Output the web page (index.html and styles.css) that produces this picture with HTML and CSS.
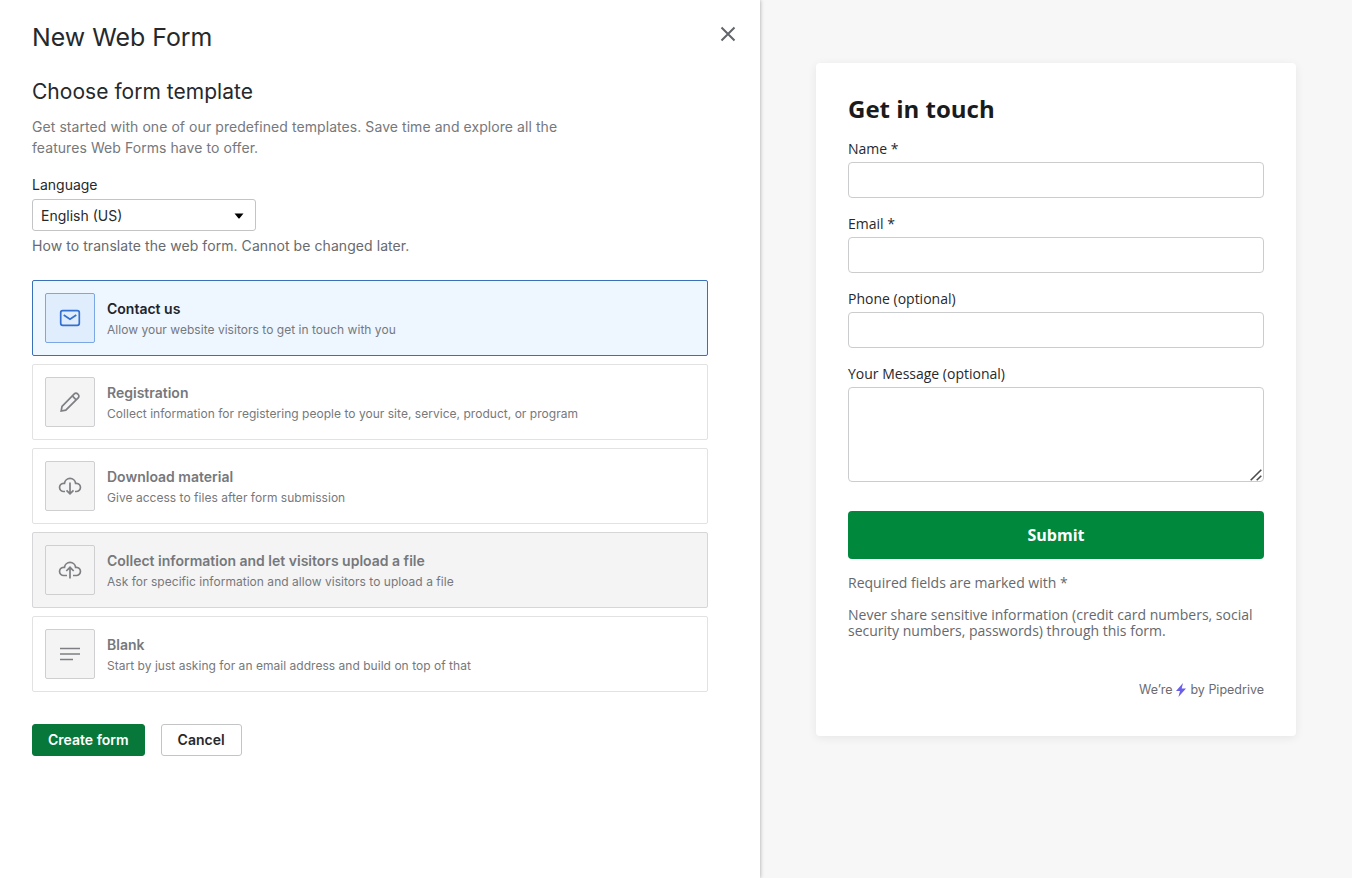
FILE: index.html
```html
<!DOCTYPE html>
<html lang="en">
  <head>
    <meta charset="UTF-8" />
    <meta name="viewport" content="width=device-width, initial-scale=1.0" />
    <title>New Web Form</title>
    <link rel="stylesheet" href="styles.css">
  </head>
  <body>
    <main class="panel">
      <header class="panel-header">
        <h1>New Web Form</h1>
        <button class="close" aria-label="Close">
          <svg width="16" height="16" viewBox="0 0 16 16"><path d="M1.5 1.5l13 13M14.5 1.5l-13 13" /></svg>
        </button>
      </header>

      <h2>Choose form template</h2>
      <p class="intro">Get started with one of our predefined templates. Save time and explore all the features Web Forms have to offer.</p>

      <div class="language">
        <label>Language</label>
        <div class="select">
          <span>English (US)</span>
          <svg width="10" height="6" viewBox="0 0 10 6"><path d="M.5.5h9L5.600 5.200a.8.8 0 0 1-1.200 0z" /></svg>
        </div>
        <p class="hint">How to translate the web form. Cannot be changed later.</p>
      </div>

      <div class="templates">
        <div class="template selected">
          <div class="template-icon">
            <svg width="24" height="24" viewBox="0 0 24 24">
              <rect x="2.7" y="4.7" width="18.6" height="14.6" rx="2" />
              <path d="M5.700 9l6.300 4.300L18.300 9" />
            </svg>
          </div>
          <div class="template-text">
            <h3>Contact us</h3>
            <p>Allow your website visitors to get in touch with you</p>
          </div>
        </div>
        <div class="template">
          <div class="template-icon">
            <svg width="24" height="24" viewBox="0 0 24 24">
              <path d="M3.200 21l.8-4.600L16.300 3.900a2.300 2.300 0 0 1 3.300 0l.6.6a2.300 2.300 0 0 1 0 3.300L7.800 20.200z" />
              <path d="M14.300 5.900l3.900 3.900" />
            </svg>
          </div>
          <div class="template-text">
            <h3>Registration</h3>
            <p>Collect information for registering people to your site, service, product, or program</p>
          </div>
        </div>
        <div class="template">
          <div class="template-icon">
            <svg width="24" height="24" viewBox="0 0 24 24">
              <path d="M7 17.500H5.800a4.100 4.100 0 0 1-.3-8.200h1a5.600 5.600 0 0 1 11.100 0h.9a4.100 4.100 0 0 1-.3 8.200H17" />
              <path d="M12 8.500v11.200M8.500 16.400l3.500 3.500 3.500-3.500" />
            </svg>
          </div>
          <div class="template-text">
            <h3>Download material</h3>
            <p>Give access to files after form submission</p>
          </div>
        </div>
        <div class="template hovered">
          <div class="template-icon">
            <svg width="24" height="24" viewBox="0 0 24 24">
              <path d="M9 17.500H5.800a4.100 4.100 0 0 1-.3-8.200h1a5.600 5.600 0 0 1 11.100 0h.9a4.100 4.100 0 0 1-.3 8.200H15" />
              <path d="M12 20.500v-11M8.300 13L12 9.300l3.700 3.700" />
            </svg>
          </div>
          <div class="template-text">
            <h3>Collect information and let visitors upload a file</h3>
            <p>Ask for specific information and allow visitors to upload a file</p>
          </div>
        </div>
        <div class="template">
          <div class="template-icon">
            <svg width="24" height="24" viewBox="0 0 24 24">
              <path d="M2 6.500h20M2 12h20M2 17.500h13" />
            </svg>
          </div>
          <div class="template-text">
            <h3>Blank</h3>
            <p>Start by just asking for an email address and build on top of that</p>
          </div>
        </div>
      </div>

      <div class="actions">
        <button class="btn btn-primary">Create form</button>
        <button class="btn">Cancel</button>
      </div>
    </main>

    <aside class="preview">
      <form class="form-card">
        <h2>Get in touch</h2>
        <div class="field">
          <label for="name">Name *</label>
          <input type="text" id="name" />
        </div>
        <div class="field">
          <label for="email">Email *</label>
          <input type="text" id="email" />
        </div>
        <div class="field">
          <label for="phone">Phone (optional)</label>
          <input type="text" id="phone" />
        </div>
        <div class="field">
          <label for="message">Your Message (optional)</label>
          <textarea id="message"></textarea>
          <svg class="resizer" width="12" height="12" viewBox="0 0 12 12"><path d="M.7 11.300L11.300.7M6.700 11.300l4.600-4.600" /></svg>
        </div>
        <button type="button" class="submit">Submit</button>
        <p class="note">Required fields are marked with *</p>
        <p class="note">Never share sensitive information (credit card numbers, social security numbers, passwords) through this form.</p>
        <div class="powered">
          <span>We’re</span>
          <svg width="10" height="14" viewBox="0 0 10 14"><path d="M7 0L0 8h4l-1.600 6L10 5.400H5.700z" /></svg>
          <span>by Pipedrive</span>
        </div>
      </form>
    </aside>
  </body>
</html>
```
FILE: styles.css
```css
* {
  box-sizing: border-box;
}
body {
  display: flex;
  height: 100vh;
  margin: 0;
  overflow: hidden;
  background: #f7f7f7;
  color: #26292c;
  font-family: Inter, sans-serif;
  font-size: 14px;
}
h1, h2, h3, p {
  margin: 0;
}
button {
  font-family: inherit;
}
.panel {
  position: relative;
  width: 760px;
  padding: 20px 52px 0 32px;
  background: #fff;
  box-shadow: 0 0 4px rgba(0, 0, 0, 0.35);
}
.panel-header {
  display: flex;
  justify-content: space-between;
  margin-right: -28px;
}
h1 {
  font-size: 24.9px;
  line-height: 34px;
  font-weight: 390;
}
.close {
  display: flex;
  height: 16px;
  margin-top: 6px;
  padding: 0;
  border: none;
  background: none;
}
.close svg {
  fill: none;
  stroke: #62656a;
  stroke-width: 2;
}
.panel h2 {
  margin-top: 24px;
  font-size: 21px;
  line-height: 28px;
  font-weight: 390;
  letter-spacing: 0.03px;
}
.intro {
  width: 560px;
  margin-top: 10px;
  line-height: 21px;
  letter-spacing: 0.065px;
  color: #76787c;
}
.language {
  margin-top: 17px;
}
.language label {
  display: block;
  line-height: 20px;
}
.select {
  display: flex;
  align-items: center;
  justify-content: space-between;
  width: 224px;
  height: 32px;
  margin-top: 4px;
  padding: 1px 11px 0 8px;
  border: 1px solid #c3c4c6;
  border-radius: 3px;
}
.hint {
  margin-top: 5px;
  line-height: 20px;
  letter-spacing: 0.065px;
  color: #686a6e;
}

/* Template list */
.templates {
  display: flex;
  flex-direction: column;
  gap: 8px;
  margin-top: 24px;
}
.template {
  display: flex;
  gap: 12px;
  height: 76px;
  padding: 12px;
  border: 1px solid #e2e2e3;
  border-radius: 2px;
  color: #76787c;
}
.template-icon {
  display: flex;
  align-items: center;
  justify-content: center;
  width: 50px;
  height: 50px;
  border: 1px solid #cfcfd1;
  border-radius: 2px;
  background: #f4f4f4;
}
.template-icon svg {
  fill: none;
  stroke: #7d7f83;
  stroke-width: 1.7;
}
.template-text {
  padding-top: 6px;
}
.template h3 {
  font-size: 14px;
  line-height: 20px;
  font-weight: 600;
}
.template p {
  margin-top: 1px;
  font-size: 12px;
  line-height: 20px;
  letter-spacing: 0.03px;
}
.template.selected {
  border-color: #3a70b8;
  background: #eef6ff;
}
.selected .template-icon {
  border-color: #7ba7e4;
  background: #e0edfd;
}
.selected .template-icon svg {
  stroke: #3470cf;
}
.selected h3 {
  color: #21232c;
}
.template.hovered {
  border-color: #d6d6d8;
  background: #f4f4f4;
}

.actions {
  display: flex;
  gap: 16px;
  margin-top: 32px;
}
.btn {
  height: 32px;
  padding: 0 16px 2px;
  border: 1px solid #c3c4c6;
  border-radius: 3px;
  background: #fff;
  color: #26292c;
  font-size: 14px;
  font-weight: 600;
}
.btn-primary {
  padding: 0 15px 2px;
  border-color: #08783a;
  background: #08783a;
  color: #fff;
}

/* Form preview */
.preview {
  flex: 1;
  padding: 63px 56px 0;
}
.form-card {
  height: 673px;
  padding: 32px;
  border-radius: 4px;
  background: #fff;
  box-shadow: 0 2px 10px rgba(0, 0, 0, 0.07);
  font-family: 'Open Sans', sans-serif;
}
.form-card h2 {
  margin-bottom: 16px;
  font-size: 24px;
  line-height: 28px;
  font-weight: 700;
  color: #1a1b1d;
}
.field {
  position: relative;
  margin-bottom: 16px;
}
.field label {
  display: block;
  margin-bottom: 4px;
  line-height: 19px;
}
.field input,
.field textarea {
  display: block;
  width: 100%;
  height: 36px;
  border: 1px solid #cbccce;
  border-radius: 4px;
  background: #fff;
}
.field textarea {
  height: 95px;
  resize: none;
}
/* Resize grip over the textarea corner */
.resizer {
  position: absolute;
  right: 2px;
  bottom: 1px;
  fill: none;
  stroke: #4c4c4c;
  stroke-width: 1.6;
}
.submit {
  width: 100%;
  height: 48px;
  margin: 13px 0 16px;
  border: none;
  border-radius: 4px;
  background: #00893d;
  color: #fff;
  font-size: 16px;
  font-weight: 700;
}
.note {
  margin-bottom: 16px;
  line-height: 16px;
  color: #65696e;
}
.powered {
  display: flex;
  align-items: center;
  justify-content: flex-end;
  gap: 4px;
  margin-top: 42px;
  color: #6a6c73;
  font-family: Inter, sans-serif;
  font-size: 12.5px;
  line-height: 17px;
}
.powered svg {
  fill: #6b5ee8;
}
```
